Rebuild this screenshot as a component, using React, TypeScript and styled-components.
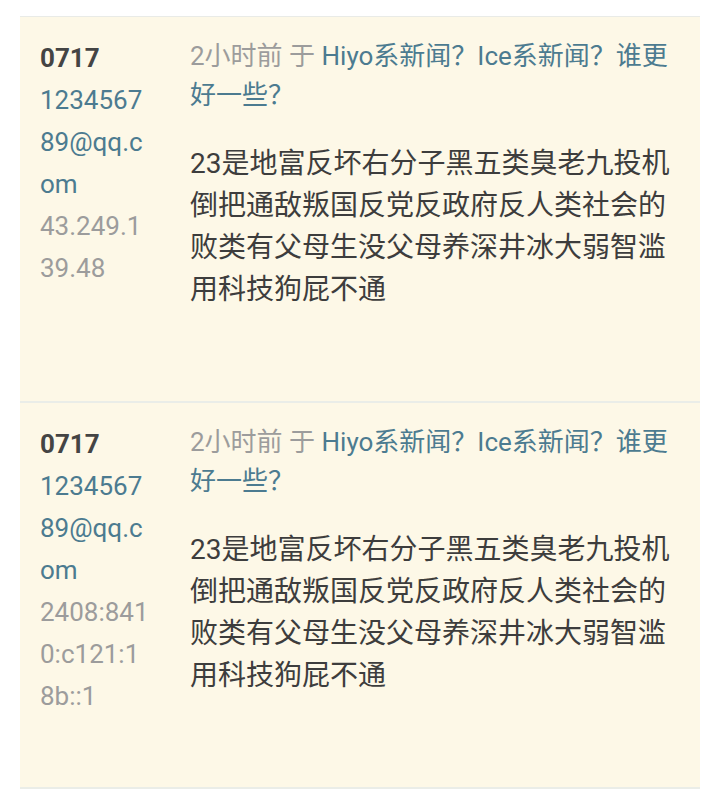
import React from "react";
import styled, { createGlobalStyle } from "styled-components";

const GlobalStyle = createGlobalStyle`
  html, body {
    margin: 0;
    padding: 0;
    background: #ffffff;
  }
  body {
    font-family: Roboto, "Noto Sans CJK SC", sans-serif;
    -webkit-font-smoothing: antialiased;
  }
`;

const Page = styled.div`
  padding: 16px 20px 0 20px;
`;

const List = styled.div`
  border-top: 1px solid #e9ebe7;
  background: #fdf8e7;
`;

const Row = styled.div`
  display: flex;
  padding: 20px 20px 0 20px;
  border-bottom: 2px solid #eaede8;
`;

const Author = styled.div`
  flex: none;
  width: 110px;
  margin-right: 40px;
  font-size: 26px;
  line-height: 42px;
  word-break: break-all;
`;

const Name = styled.div`
  color: #444444;
  font-weight: 700;
`;

const Email = styled.div`
  color: #4c7b90;
`;

const Ip = styled.div`
  color: #9c9c9c;
`;

const Main = styled.div`
  flex: 1;
  min-width: 0;
  padding-bottom: 90px;
`;

const Meta = styled.div`
  font-size: 26px;
  line-height: 39px;
  color: #9c9c9c;
`;

const Time = styled.span`
  color: #9c9c9c;
`;

const Topic = styled.span`
  color: #4c7b90;
`;

const Body = styled.p`
  margin: 28px 0 0 0;
  font-size: 28px;
  line-height: 42px;
  color: #3d3d3d;
`;

type Comment = {
  name: string;
  email: string;
  ip: string;
  time: string;
  topic: string;
  text: string;
};

const comments: Comment[] = [
  {
    name: "0717",
    email: "123456789@qq.com",
    ip: "43.249.139.48",
    time: "2小时前",
    topic: "Hiyo系新闻？Ice系新闻？谁更好一些？",
    text: "23是地富反坏右分子黑五类臭老九投机倒把通敌叛国反党反政府反人类社会的败类有父母生没父母养深井冰大弱智滥用科技狗屁不通",
  },
  {
    name: "0717",
    email: "123456789@qq.com",
    ip: "2408:8410:c121:18b::1",
    time: "2小时前",
    topic: "Hiyo系新闻？Ice系新闻？谁更好一些？",
    text: "23是地富反坏右分子黑五类臭老九投机倒把通敌叛国反党反政府反人类社会的败类有父母生没父母养深井冰大弱智滥用科技狗屁不通",
  },
];

export default function App() {
  return (
    <>
      <GlobalStyle />
      <Page>
        <List>
          {comments.map((c, i) => (
            <Row key={i}>
              <Author>
                <Name>{c.name}</Name>
                <Email>{c.email}</Email>
                <Ip>{c.ip}</Ip>
              </Author>
              <Main>
                <Meta>
                  <Time>{c.time} 于 </Time>
                  <Topic>{c.topic}</Topic>
                </Meta>
                <Body>{c.text}</Body>
              </Main>
            </Row>
          ))}
        </List>
      </Page>
    </>
  );
}
